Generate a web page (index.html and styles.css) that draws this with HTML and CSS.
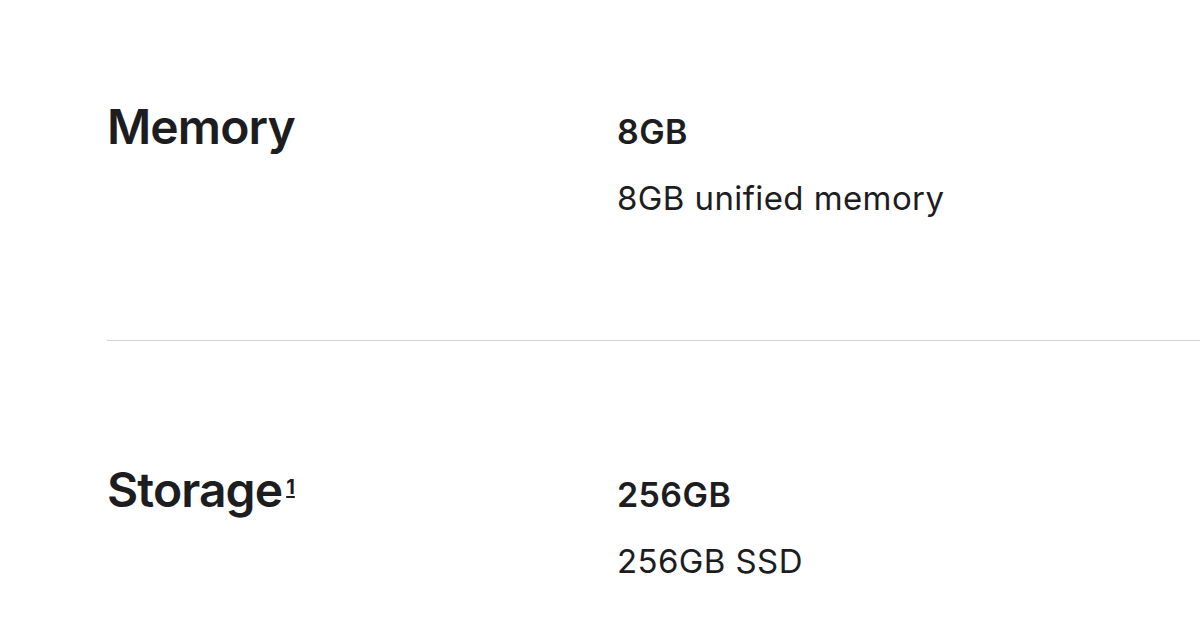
FILE: index.html
```html
<!DOCTYPE html>
<html lang="en">
<head>
<meta charset="utf-8">
<title>Tech Specs</title>
<link rel="stylesheet" href="styles.css">
</head>
<body>
<main class="specs">
  <section class="row row-first">
    <h2 class="label">Memory</h2>
    <div class="content">
      <p class="value">8GB</p>
      <p class="desc">8GB unified memory</p>
    </div>
  </section>
  <section class="row">
    <h2 class="label">Storage<sup class="fn">1</sup></h2>
    <div class="content">
      <p class="value">256GB</p>
      <p class="desc">256GB SSD</p>
    </div>
  </section>
</main>
</body>
</html>
```
FILE: styles.css
```css
html, body {
  margin: 0;
  padding: 0;
  background: #ffffff;
}
body {
  font-family: Inter, "Noto Sans", "Liberation Sans", sans-serif;
  color: #1d1d1f;
  overflow: hidden;
}
.specs {
  padding-left: 107px;
}
.row {
  display: flex;
  align-items: baseline;
  box-sizing: border-box;
  padding-top: 120px;
  padding-bottom: 30px;
  border-top: 1px solid #d2d2d7;
}
.row-first {
  border-top: none;
  padding-top: 98px;
  padding-bottom: 0;
  height: 340px;
}
.label {
  width: 510px;
  flex: none;
  margin: 0;
  font-size: 48px;
  font-weight: 600;
  line-height: 1.2;
  letter-spacing: -0.9px;
}
.fn {
  font-size: 20px;
  font-weight: 700;
  line-height: 1;
  vertical-align: 13px;
  margin-left: 4px;
  letter-spacing: 0;
  text-decoration: underline;
  text-decoration-thickness: 2px;
  text-underline-offset: 2px;
}
.value {
  margin: 0;
  font-size: 34px;
  font-weight: 600;
  line-height: 1.3;
  letter-spacing: 0.4px;
}
.desc {
  margin: 23px 0 0;
  font-size: 33px;
  font-weight: 400;
  line-height: 1.3;
  letter-spacing: 0.4px;
}
```
